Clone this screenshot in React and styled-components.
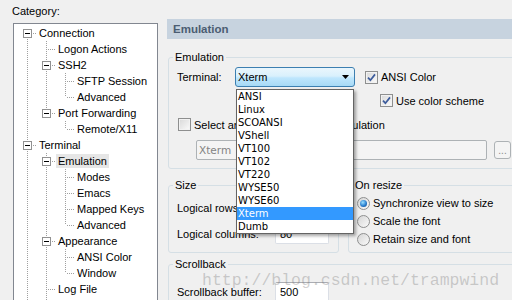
import React from "react";
import styled, { createGlobalStyle } from "styled-components";

const GlobalStyle = createGlobalStyle`
  html, body {
    margin: 0;
    padding: 0;
    background: #f0f0f0;
  }
  body {
    font-family: "Liberation Sans", Arial, sans-serif;
    font-size: 11px;
    color: #000;
  }
`;

const Screen = styled.div`
  position: relative;
  width: 512px;
  height: 300px;
  overflow: hidden;
  display: flex;
  background: #f0f0f0;
`;

/* ---------- category tree ---------- */

const LeftPane = styled.div`
  width: 167px;
  flex-shrink: 0;
  display: flex;
  flex-direction: column;
`;

const CategoryLabel = styled.div`
  padding: 4px 0 5px 12px;
  line-height: 14px;
`;

const TreeBox = styled.div`
  margin-left: 13px;
  width: 145px;
  box-sizing: border-box;
  flex: 1;
  background: #fff;
  border: 1px solid #828790;
  border-bottom: none;
  padding: 1px 0 0 4px;
  overflow: hidden;
`;

const dotsV = "repeating-linear-gradient(to bottom, #a0a0a0 0 1px, transparent 1px 2px)";
const dotsH = "repeating-linear-gradient(to right, #a0a0a0 0 1px, transparent 1px 2px)";

const TreeRow = styled.div`
  display: flex;
  align-items: center;
  height: 16px;
  white-space: nowrap;
`;

const Guide = styled.span`
  position: relative;
  flex: 0 0 19px;
  height: 16px;
  display: flex;
  justify-content: center;
  align-items: flex-start;

  &::before {
    content: "";
    display: ${(p) => (p.$up || p.$down ? "block" : "none")};
    position: absolute;
    left: 9px;
    width: 1px;
    top: ${(p) => (p.$up ? 0 : 8)}px;
    bottom: ${(p) => (p.$down ? 0 : 8)}px;
    background: ${dotsV};
  }
  &::after {
    content: "";
    display: ${(p) => (p.$across ? "block" : "none")};
    position: absolute;
    left: 11px;
    right: 0;
    top: 8px;
    height: 1px;
    background: ${dotsH};
  }
`;

const Expander = styled.span`
  position: relative;
  z-index: 1;
  box-sizing: border-box;
  margin-top: 4px;
  width: 9px;
  height: 9px;
  border: 1px solid #919191;
  background: #fff;

  &::after {
    content: "";
    position: absolute;
    left: 1px;
    top: 3px;
    width: 5px;
    height: 1px;
    background: #000;
  }
`;

const TreeLabel = styled.span`
  padding: 0 2px;
  line-height: 14px;
  background: ${(p) => (p.$selected ? "#e6e6e6" : "transparent")};
`;

const tree = [
  {
    label: "Connection",
    children: [
      { label: "Logon Actions" },
      { label: "SSH2", children: [{ label: "SFTP Session" }, { label: "Advanced" }] },
      { label: "Port Forwarding", children: [{ label: "Remote/X11" }] },
    ],
  },
  {
    label: "Terminal",
    children: [
      {
        label: "Emulation",
        selected: true,
        children: [
          { label: "Modes" },
          { label: "Emacs" },
          { label: "Mapped Keys" },
          { label: "Advanced" },
        ],
      },
      { label: "Appearance", children: [{ label: "ANSI Color" }, { label: "Window" }] },
      { label: "Log File" },
      { label: "Printing" },
      { label: "X/Y/Zmodem" },
    ],
  },
  { label: "File Transfer", children: [{ label: "FTP/SFTP" }] },
];

function flatten(nodes, trail = [], out = []) {
  nodes.forEach((node, i) => {
    const last = i === nodes.length - 1;
    out.push({ ...node, trail, first: trail.length === 0 && i === 0, last });
    if (node.children) flatten(node.children, [...trail, !last], out);
  });
  return out;
}

const rows = flatten(tree);

const CategoryTree = () => (
  <TreeBox>
    {rows.map((row, i) => (
      <TreeRow key={i}>
        {row.trail.map((cont, j) => (
          <Guide key={j} $up={cont} $down={cont} />
        ))}
        <Guide $up={!row.first} $down={!row.last} $across>
          {row.children && <Expander />}
        </Guide>
        <TreeLabel $selected={row.selected}>{row.label}</TreeLabel>
      </TreeRow>
    ))}
  </TreeBox>
);

/* ---------- settings page ---------- */

const RightPane = styled.div`
  width: 360px;
  flex-shrink: 0;
  display: flex;
  flex-direction: column;
`;

const PageHeader = styled.div`
  margin-top: 19px;
  height: 20px;
  line-height: 20px;
  padding-left: 6px;
  background: #c7d3df;
  color: #4b5d72;
  font-weight: bold;
  font-size: 11.5px;
`;

const PageBody = styled.div`
  display: flex;
  flex-direction: column;
  padding-left: 1px;
`;

const Group = styled.fieldset`
  margin: ${(p) => p.$mt || 0}px 0 0 0;
  padding: 0;
  min-width: 0;
  box-sizing: border-box;
  border: 1px solid #d5dfe5;
  border-radius: 3px;
  ${(p) => (p.$w ? `width: ${p.$w}px; flex: none;` : "flex: 1;")}
`;

const Legend = styled.legend`
  margin-left: 4px;
  padding: 0 2px;
  line-height: 14px;
  font-size: 11px;
`;

const GroupBody = styled.div`
  display: flex;
  flex-direction: column;
  padding: ${(p) => p.$pad};
`;

const GroupRow = styled.div`
  display: flex;
  gap: 9px;
  margin-top: 9px;
`;

const FieldRow = styled.div`
  display: flex;
  align-items: center;
  height: ${(p) => p.$h || 20}px;
  margin-top: ${(p) => p.$mt || 0}px;
  padding-left: ${(p) => p.$indent || 0}px;
  white-space: nowrap;
`;

const FieldLabel = styled.span`
  width: ${(p) => p.$w}px;
  flex: none;
  white-space: nowrap;
`;

const Combo = styled.div`
  position: relative;
  box-sizing: border-box;
  width: 120px;
  height: 20px;
  flex: none;
  display: flex;
  align-items: center;
  padding-left: 2px;
  border: 1px solid #3c7fb1;
  border-radius: 3px;
  background: linear-gradient(#eaf6fd, #d9f0fc 45%, #bee6fd 55%, #a7d9f5);
`;

const ComboArrow = styled.span`
  margin-left: auto;
  width: 17px;
  height: 100%;
  display: flex;
  align-items: center;
  justify-content: center;
`;

const DropList = styled.ul`
  position: absolute;
  z-index: 10;
  left: 0;
  top: 21px;
  width: 118px;
  box-sizing: border-box;
  margin: 0;
  padding: 0;
  list-style: none;
  background: #fff;
  border: 1px solid #646464;
  box-shadow: 2px 2px 3px rgba(0, 0, 0, 0.35);
`;

const DropItem = styled.li`
  height: 13px;
  line-height: 13px;
  padding-left: 1px;
  font-family: "DejaVu Sans", Verdana, sans-serif;
  font-size: 10px;
  background: ${(p) => (p.$active ? "#3399ff" : "transparent")};
  color: ${(p) => (p.$active ? "#fff" : "#000")};
`;

const CheckItem = styled.span`
  display: flex;
  align-items: center;
  gap: 3px;
  margin-left: ${(p) => p.$ml || 0}px;
`;

const CheckBox = styled.span`
  box-sizing: border-box;
  width: 13px;
  height: 13px;
  flex: none;
  display: flex;
  align-items: center;
  justify-content: center;
  border: 1px solid #8e8f8f;
  background: linear-gradient(135deg, #d8d8d8, #fbfbfb);
  box-shadow: inset 0 0 0 1px #f2f2f2;
`;

const Radio = styled.span`
  box-sizing: border-box;
  width: 13px;
  height: 13px;
  flex: none;
  display: flex;
  align-items: center;
  justify-content: center;
  border: 1px solid #8e8f8f;
  border-radius: 50%;
  background: linear-gradient(135deg, #d5d5d5, #fafafa);

  &::after {
    content: "";
    display: ${(p) => (p.$on ? "block" : "none")};
    width: 7px;
    height: 7px;
    border-radius: 50%;
    background: radial-gradient(circle at 40% 35%, #9ae0ff, #2a7fd0 55%, #0d3f7a);
  }
`;

const TextBox = styled.div`
  box-sizing: border-box;
  width: 54px;
  height: 20px;
  flex: none;
  padding-left: 4px;
  line-height: 18px;
  background: #fff;
  border: 1px solid #dbdfe6;
  border-top-color: #abadb3;
  border-radius: 2px;
`;

const DisabledField = styled.div`
  box-sizing: border-box;
  width: 291px;
  height: 20px;
  flex: none;
  padding-left: 2px;
  line-height: 18px;
  border: 1px solid #adb2b5;
  border-radius: 2px;
  background: #f4f4f4;
  color: #838383;
  font-family: "DejaVu Sans", Verdana, sans-serif;
  font-size: 10.5px;
`;

const BrowseButton = styled.div`
  box-sizing: border-box;
  width: 17px;
  height: 18px;
  flex: none;
  margin-left: 7px;
  border: 1px solid #adb2b5;
  border-radius: 3px;
  background: #f4f4f4;
  color: #8a8a8a;
  font-size: 10px;
  line-height: 18px;
  text-align: center;
`;

const Watermark = styled.div`
  position: absolute;
  z-index: 20;
  left: 202px;
  top: 271px;
  font-family: "Liberation Mono", monospace;
  font-size: 16.5px;
  line-height: 20px;
  white-space: nowrap;
  color: rgba(120, 120, 120, 0.35);
  pointer-events: none;
`;

const Check = () => (
  <svg width="9" height="9" viewBox="0 0 9 9">
    <path d="M1 4.6 L3.4 7.2 L8 1.4" fill="none" stroke="#3d5c9c" strokeWidth="1.7" />
  </svg>
);

const Arrow = () => (
  <svg width="7" height="4" viewBox="0 0 7 4">
    <path d="M0 0h7L3.5 4z" fill="#000" />
  </svg>
);

const terminals = ["ANSI", "Linux", "SCOANSI", "VShell", "VT100", "VT102", "VT220", "WYSE50", "WYSE60", "Xterm", "Dumb"];

const App = () => (
  <Screen>
    <GlobalStyle />
    <LeftPane>
      <CategoryLabel>Category:</CategoryLabel>
      <CategoryTree />
    </LeftPane>

    <RightPane>
      <PageHeader>Emulation</PageHeader>
      <PageBody>
        <Group $mt={11}>
          <Legend>Emulation</Legend>
          <GroupBody $pad="3px 0 8px 8px">
            <FieldRow>
              <FieldLabel $w={58}>Terminal:</FieldLabel>
              <Combo>
                Xterm
                <ComboArrow>
                  <Arrow />
                </ComboArrow>
                <DropList>
                  {terminals.map((t) => (
                    <DropItem key={t} $active={t === "Xterm"}>
                      {t}
                    </DropItem>
                  ))}
                </DropList>
              </Combo>
              <CheckItem $ml={10}>
                <CheckBox>
                  <Check />
                </CheckBox>
                ANSI Color
              </CheckItem>
            </FieldRow>
            <FieldRow $h={13} $mt={7} $indent={203}>
              <CheckItem>
                <CheckBox>
                  <Check />
                </CheckBox>
                Use color scheme
              </CheckItem>
            </FieldRow>
            <FieldRow $h={13} $mt={11} $indent={1}>
              <CheckItem>
                <CheckBox />
                Select an alternate keyboard emulation
              </CheckItem>
            </FieldRow>
            <FieldRow $mt={9} $indent={19}>
              <DisabledField>Xterm</DisabledField>
              <BrowseButton>...</BrowseButton>
            </FieldRow>
          </GroupBody>
        </Group>

        <GroupRow>
          <Group $w={171}>
            <Legend>Size</Legend>
            <GroupBody $pad="6px 0 8px 8px">
              <FieldRow>
                <FieldLabel $w={98}>Logical rows:</FieldLabel>
                <TextBox>24</TextBox>
              </FieldRow>
              <FieldRow $mt={6}>
                <FieldLabel $w={98}>Logical columns:</FieldLabel>
                <TextBox>80</TextBox>
              </FieldRow>
            </GroupBody>
          </Group>
          <Group>
            <Legend>On resize</Legend>
            <GroupBody $pad="2px 0 4px 8px">
              <FieldRow $h={18}>
                <CheckItem>
                  <Radio $on />
                  Synchronize view to size
                </CheckItem>
              </FieldRow>
              <FieldRow $h={18}>
                <CheckItem>
                  <Radio />
                  Scale the font
                </CheckItem>
              </FieldRow>
              <FieldRow $h={18}>
                <CheckItem>
                  <Radio />
                  Retain size and font
                </CheckItem>
              </FieldRow>
            </GroupBody>
          </Group>
        </GroupRow>

        <Group $mt={4}>
          <Legend>Scrollback</Legend>
          <GroupBody $pad="11px 0 8px 8px">
            <FieldRow>
              <FieldLabel $w={98}>Scrollback buffer:</FieldLabel>
              <TextBox>500</TextBox>
            </FieldRow>
          </GroupBody>
        </Group>
      </PageBody>
    </RightPane>

    <Watermark>http://blog.csdn.net/trampwind</Watermark>
  </Screen>
);

export default App;
